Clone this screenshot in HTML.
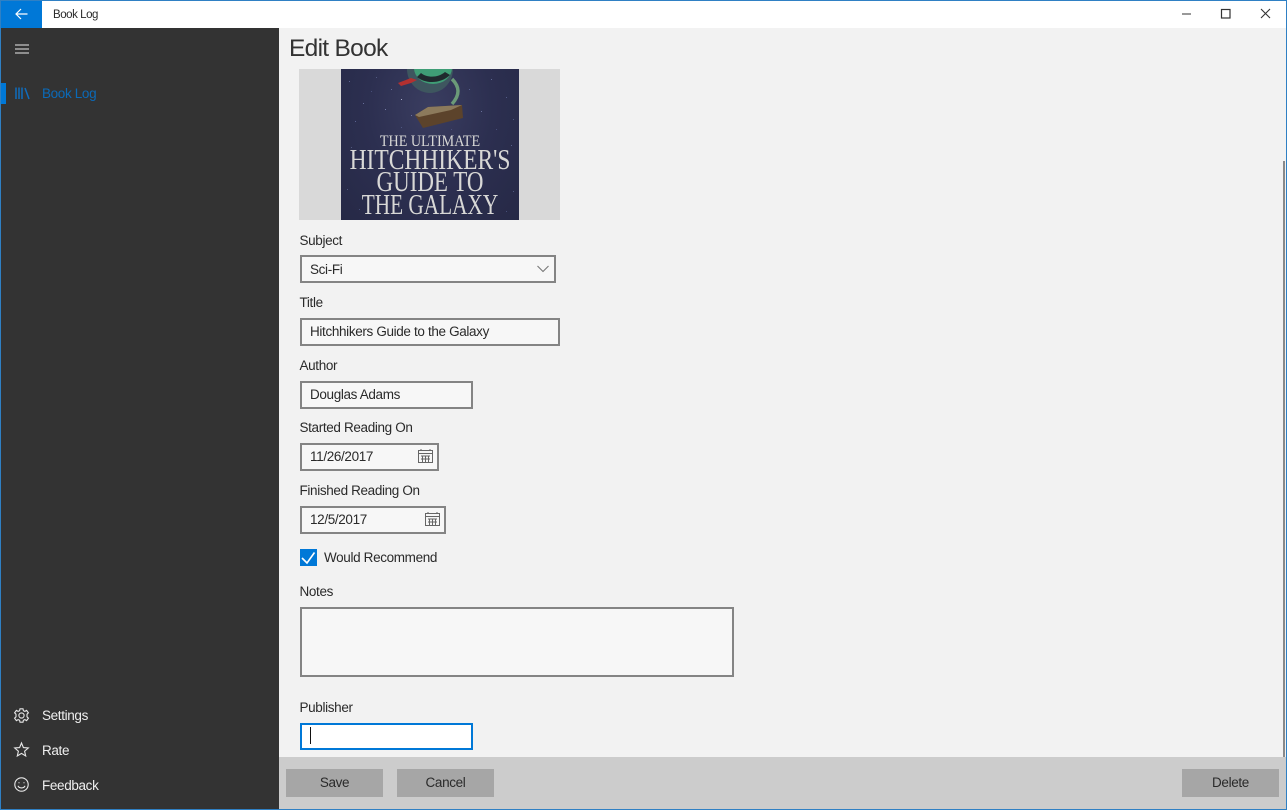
<!DOCTYPE html>
<html><head><meta charset="utf-8"><style>
html,body{margin:0;padding:0}
body{width:1287px;height:810px;position:relative;overflow:hidden;background:#f2f2f2;font-family:"Liberation Sans",sans-serif;font-size:13.5px;letter-spacing:-.35px;color:#1a1a1a}
div,span{position:absolute;box-sizing:border-box;white-space:nowrap}
.l{left:299.5px;font-size:13.5px;line-height:18px;color:#2a2a2a}
.b{border:2px solid #848484;background:#f7f7f7;left:300px;height:28px;line-height:23px;padding-left:8px;font-size:13.5px;color:#2a2a2a}
.nav{left:42px;font-size:13.5px;line-height:18px;color:#efefef}
.btn{top:769px;height:28px;background:#a6a6a6;text-align:center;line-height:28px;font-size:13.5px;color:#2a2a2a}
.t{left:-40px;width:258px;letter-spacing:0}
svg{position:absolute;overflow:visible}
#stars{left:0;top:0;width:1px;height:1px;background:transparent;box-shadow:8px 12px 0 #5c6390,22px 34px 0 #666d99,35px 8px 0 #505880,14px 52px 0 #5a6290,44px 40px 0 #767ca6,60px 58px 0 #4e5682,30px 22px 0 #474f7a,150px 10px 0 #5e6692,165px 28px 0 #525a86,140px 42px 0 #686f9a,172px 50px 0 #4e5680,128px 20px 0 #596190,155px 60px 0 #484f7a,10px 78px 0 #50587f,170px 76px 0 #575f8a,20px 95px 0 #464e78,160px 95px 0 #4a527c,6px 120px 0 #50587f,172px 122px 0 #50587f,50px 20px 0 #626a96,100px 52px 0 #5a6290,60px 30px 0 #a8adcc,70px 46px 0 #6c739e,40px 66px 0 #505884,135px 66px 0 #525a86,110px 60px 0 #484f7a,18px 140px 0 #464e78,165px 142px 0 #464e78}
</style></head><body>
<div style="left:0;top:0;width:1287px;height:28px;background:#fff"></div>
<div style="left:0;top:1px;width:42px;height:27px;background:#0078d7"></div>
<svg style="left:15px;top:8px" width="14" height="12" fill="none" stroke="#fff" stroke-width="1.2"><path d="M1 6H12.5M6 1L1 6L6 11"/></svg>
<div style="left:53px;top:7.5px;font-size:11.5px;letter-spacing:-.45px;line-height:14px;color:#2a2a2a">Book Log</div>
<svg style="left:1180px;top:8px" width="100" height="12" fill="none" stroke="#333" stroke-width="1"><path d="M2 6H11"/><rect x="41.5" y="1.5" width="8.5" height="8.5" stroke-width="1.2"/><path d="M81 1L90 10M90 1L81 10" stroke-width="1.1"/></svg>

<div style="left:0;top:28px;width:279px;height:782px;background:#333"></div>
<svg style="left:15px;top:44px" width="14" height="10" stroke="#e8e8e8" stroke-width="1"><path d="M0 1H14M0 5H14M0 9H14"/></svg>
<div style="left:1px;top:83px;width:5px;height:21px;background:#0078d7"></div>
<svg style="left:15px;top:87px" width="15" height="13" fill="none" stroke="#0f6cbd" stroke-width="1.5"><path d="M1 0.5V12M4 0.5V12M7 0.5V12M10 1L14 12"/></svg>
<div class="nav" style="top:85px;color:#0b6ab8">Book Log</div>
<svg style="left:14px;top:708px" width="15" height="15" fill="none" stroke="#e8e8e8" stroke-width="1.1"><circle cx="7.5" cy="7.5" r="2.6"/><path d="M6 .8H9L9.4 2.7L10.9 3.4L12.6 2.4L14.4 4.8L13 6.2V8.8L14.4 10.2L12.6 12.6L10.9 11.6L9.4 12.3L9 14.2H6L5.6 12.3L4.1 11.6L2.4 12.6L.6 10.2L2 8.8V6.2L.6 4.8L2.4 2.4L4.1 3.4L5.6 2.7Z"/></svg>
<div class="nav" style="top:707px">Settings</div>
<svg style="left:14px;top:742px" width="15" height="15" fill="none" stroke="#e8e8e8" stroke-width="1.1"><path d="M7.5 1L9.4 5.6L14.3 6L10.6 9.2L11.7 14L7.5 11.4L3.3 14L4.4 9.2L.7 6L5.6 5.6Z"/></svg>
<div class="nav" style="top:742px">Rate</div>
<svg style="left:14px;top:777px" width="15" height="15" fill="none" stroke="#e8e8e8" stroke-width="1.1"><circle cx="7.5" cy="7.5" r="6.7"/><path d="M4 8.8C5 11.6 10 11.6 11 8.8M5 5.2V6.2M10 5.2V6.2"/></svg>
<div class="nav" style="top:777px">Feedback</div>

<div style="left:289px;top:34px;font-size:24.5px;letter-spacing:-.7px;line-height:30px;color:#333">Edit Book</div>

<div style="left:299px;top:69px;width:261px;height:151px;background:#d9d9d9"></div>
<div style="left:341px;top:69px;width:178px;height:151px;overflow:hidden;background:radial-gradient(ellipse at 50% 25%,#3a3d60 0,#2c2f50 50%,#262946 100%);font-family:'Liberation Serif',serif;color:#d8d8d6;text-align:center">
<div id="stars"></div>
<svg style="left:0;top:0" width="178" height="70"><ellipse cx="89" cy="0" rx="23" ry="24" fill="#3e565f"/><ellipse cx="92" cy="-1" rx="19" ry="16" fill="#3f9d76"/><path d="M76 8C84 15 100 15 109 6L104 3C97 9 86 9 80 4Z" fill="#20292e"/><path d="M57 14L70 9L76 11L70 14L60 17Z" fill="#b33030"/><path d="M111 10C119 18 119 26 111 35" stroke="#6b9a78" stroke-width="3.5" fill="none"/><path d="M74 46L87 38L121 36L122 49L82 59Z" fill="#5c432b"/><path d="M74 46L87 38L121 36L110 41L78 48Z" fill="#8c7a5c"/></svg>
<div class="t" style="top:64px;font-size:15.5px;line-height:18px;transform:scaleX(.91)">THE ULTIMATE</div>
<div class="t" style="top:77px;font-size:29px;line-height:28px;transform:scaleX(.81)">HITCHHIKER'S</div>
<div class="t" style="top:100px;font-size:28px;line-height:28px;transform:scaleX(.82)">GUIDE TO</div>
<div class="t" style="top:123px;font-size:28px;line-height:28px;transform:scaleX(.76)">THE GALAXY</div>
</div>

<div class="l" style="top:232px">Subject</div>
<div class="b" style="top:255px;width:256px;line-height:25px">Sci-Fi</div>
<svg style="left:537px;top:265px" width="12" height="8" fill="none" stroke="#777" stroke-width="1.1"><path d="M.5 1L6 6.5L11.5 1"/></svg>
<div class="l" style="top:294px">Title</div>
<div class="b" style="top:318px;width:260px">Hitchhikers Guide to the Galaxy</div>
<div class="l" style="top:357px">Author</div>
<div class="b" style="top:381px;width:173px">Douglas Adams</div>
<div class="l" style="top:419px">Started Reading On</div>
<div class="b" style="top:443px;width:139px">11/26/2017</div>
<svg style="left:418px;top:449px" width="15" height="14" fill="none" stroke="#666" stroke-width="1"><rect x=".5" y="1.5" width="14" height="12"/><path d="M.5 4.5H14.5M3 0V2M12 0V2M3 7H12M3 10H12M4.5 6.5V13M7.5 6.5V13M10.5 6.5V13"/></svg>
<div class="l" style="top:482px">Finished Reading On</div>
<div class="b" style="top:506px;width:146px">12/5/2017</div>
<svg style="left:425px;top:512px" width="15" height="14" fill="none" stroke="#666" stroke-width="1"><rect x=".5" y="1.5" width="14" height="12"/><path d="M.5 4.5H14.5M3 0V2M12 0V2M3 7H12M3 10H12M4.5 6.5V13M7.5 6.5V13M10.5 6.5V13"/></svg>
<div style="left:300px;top:549px;width:17px;height:17px;background:#0078d7"></div>
<svg style="left:300px;top:549px" width="17" height="17" fill="none" stroke="#fff" stroke-width="1.6"><path d="M2 9L7 14L14.5 3.5"/></svg>
<div class="l" style="left:324px;top:549px">Would Recommend</div>
<div class="l" style="top:583px">Notes</div>
<div class="b" style="top:607px;width:434px;height:70px"></div>
<div class="l" style="top:699px">Publisher</div>
<div class="b" style="top:723px;width:173px;height:27px;background:#fff;border-color:#0078d7"></div>
<div style="left:310px;top:727px;width:1px;height:17px;background:#111"></div>

<div style="left:279px;top:757px;width:1008px;height:53px;background:#ccc"></div>
<div class="btn" style="left:286px;width:97px">Save</div>
<div class="btn" style="left:397px;width:97px">Cancel</div>
<div class="btn" style="left:1182px;width:97px">Delete</div>
<div style="left:1283px;top:161px;width:2px;height:596px;background:#8a8a8a"></div>

<div style="left:0;top:0;width:1287px;height:1px;background:#2f80c4"></div>
<div style="left:0;top:809px;width:1287px;height:1px;background:#2f80c4"></div>
<div style="left:0;top:0;width:1px;height:810px;background:#2f80c4"></div>
<div style="left:1286px;top:0;width:1px;height:810px;background:#2f80c4"></div>
</body></html>
